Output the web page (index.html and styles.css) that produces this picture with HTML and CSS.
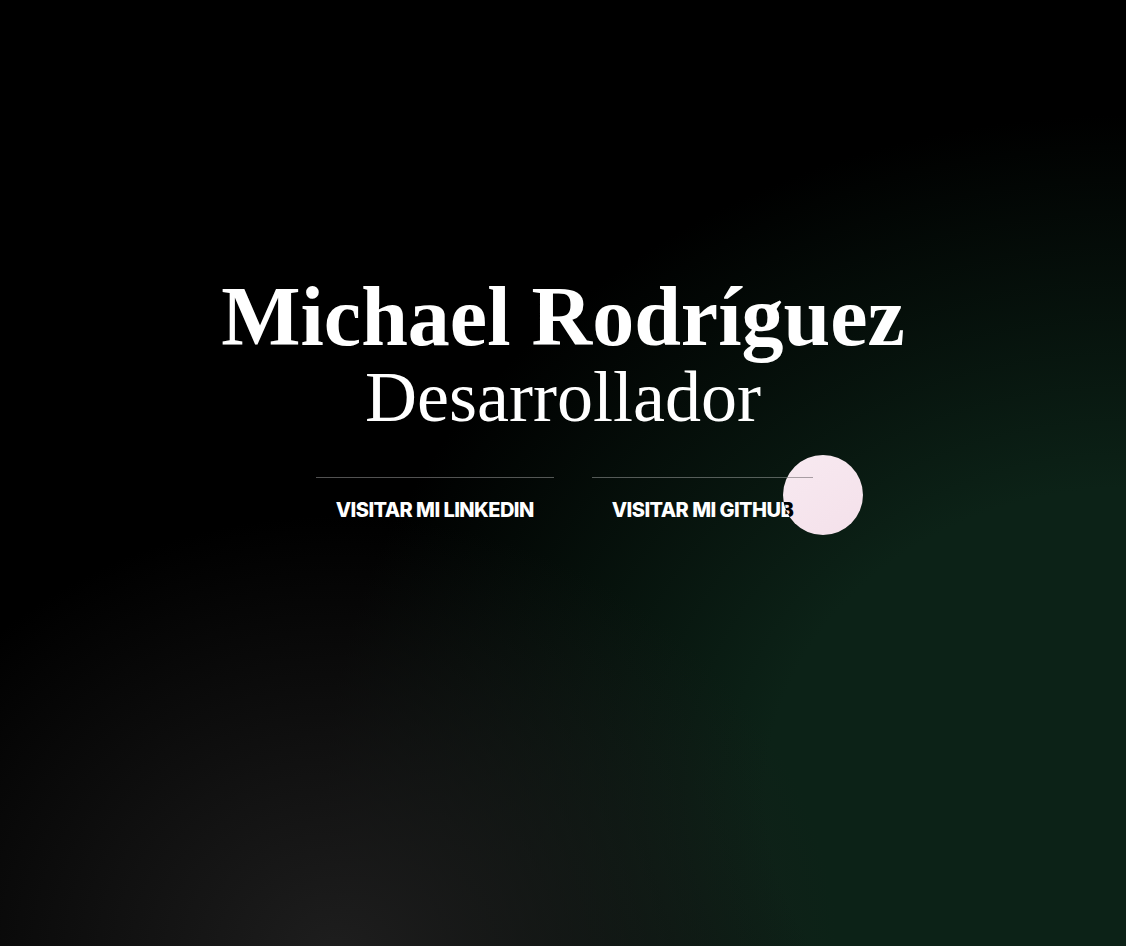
FILE: index.html
```html
<!DOCTYPE html>
<html lang="es">
<head>
<meta charset="utf-8">
<title>Michael Rodríguez</title>
<link rel="stylesheet" href="styles.css">
</head>
<body>
<main class="hero">
  <h1 class="hero-title">Michael Rodríguez</h1>
  <p class="hero-subtitle">Desarrollador</p>
  <nav class="hero-links">
    <a class="hero-link" href="#">VISITAR MI LINKEDIN</a>
    <a class="hero-link" href="#">VISITAR MI GITHUB</a>
  </nav>
</main>
<div class="cursor"></div>
</body>
</html>
```

FILE: styles.css
```css
html, body {
  margin: 0;
  padding: 0;
  height: 100%;
}

body {
  background-color: #000;
  background-image:
    radial-gradient(ellipse 500px 440px at 30% 101%, rgba(30,30,30,1) 0%, rgba(28,28,28,0.6) 45%, rgba(20,20,20,0) 100%),
    radial-gradient(ellipse 800px 680px at 100% 84%, #0c2217 0%, #0c2217 45%, rgba(12,34,23,0.55) 70%, rgba(12,34,23,0) 100%);
  min-height: 946px;
  overflow: hidden;
  color: #fff;
}

.hero {
  display: flex;
  flex-direction: column;
  align-items: center;
  padding-top: 275px;
}

.hero-title {
  margin: 0;
  font-family: "Liberation Serif", "Times New Roman", serif;
  font-weight: 700;
  font-size: 84px;
  line-height: 84px;
}

.hero-subtitle {
  margin: 2px 0 0;
  font-family: "Liberation Serif", "Times New Roman", serif;
  font-weight: 400;
  font-size: 72px;
  line-height: 72px;
}

.hero-links {
  display: flex;
  gap: 38px;
  margin-top: 44px;
  margin-left: 3px;
}

.hero-link {
  display: block;
  border-top: 1px solid rgba(255,255,255,0.32);
  padding: 21px 20px 21px;
  font-family: Inter, "Liberation Sans", Arial, sans-serif;
  font-weight: 800;
  font-size: 20px;
  line-height: 22px;
  letter-spacing: -0.55px;
  color: #fff;
  text-decoration: none;
}

.cursor {
  position: fixed;
  left: 783px;
  top: 455px;
  width: 80px;
  height: 80px;
  border-radius: 50%;
  background: #fff;
  mix-blend-mode: difference;
  pointer-events: none;
}
```
